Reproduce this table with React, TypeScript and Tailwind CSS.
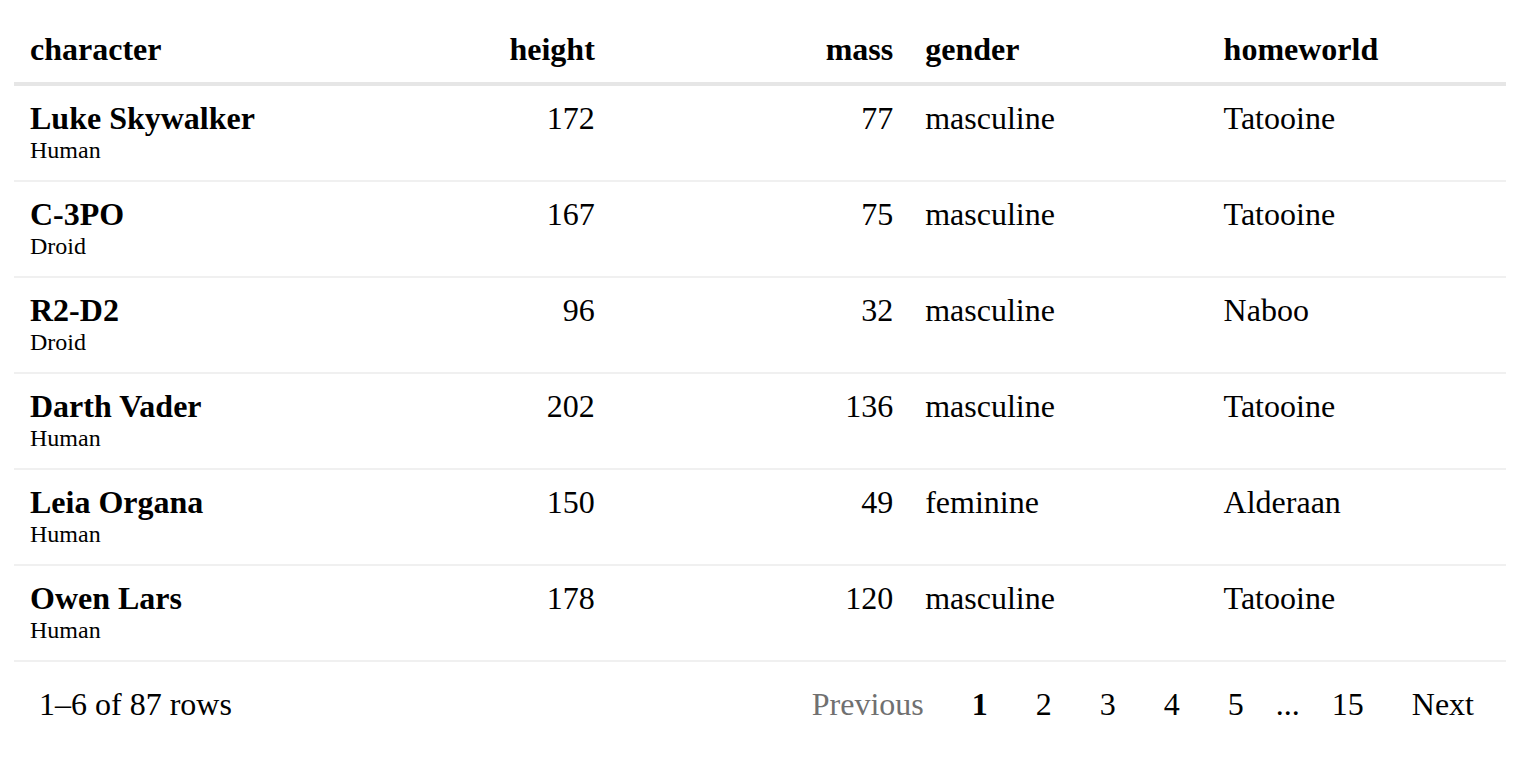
import React from 'react';

type Row = {
  name: string;
  species: string;
  height: number;
  mass: number;
  gender: string;
  homeworld: string;
};

const rows: Row[] = [
  { name: 'Luke Skywalker', species: 'Human', height: 172, mass: 77, gender: 'masculine', homeworld: 'Tatooine' },
  { name: 'C-3PO', species: 'Droid', height: 167, mass: 75, gender: 'masculine', homeworld: 'Tatooine' },
  { name: 'R2-D2', species: 'Droid', height: 96, mass: 32, gender: 'masculine', homeworld: 'Naboo' },
  { name: 'Darth Vader', species: 'Human', height: 202, mass: 136, gender: 'masculine', homeworld: 'Tatooine' },
  { name: 'Leia Organa', species: 'Human', height: 150, mass: 49, gender: 'feminine', homeworld: 'Alderaan' },
  { name: 'Owen Lars', species: 'Human', height: 178, mass: 120, gender: 'masculine', homeworld: 'Tatooine' },
];

const pages = ['1', '2', '3', '4', '5'];

const App = () => {
  return (
    <div
      className="w-full bg-white pt-[16px] pr-[16px] pl-[14px] text-black"
      style={{ fontFamily: '"Liberation Serif", "Times New Roman", serif' }}
    >
      {/* header */}
      <div className="grid grid-cols-5 border-b-4 border-[#e6e6e6] text-[32px] font-bold leading-[35px]">
        <div className="px-4 pt-4 pb-[15px]">character</div>
        <div className="px-4 pt-4 pb-[15px] text-right">height</div>
        <div className="px-4 pt-4 pb-[15px] text-right">mass</div>
        <div className="px-4 pt-4 pb-[15px]">gender</div>
        <div className="px-4 pt-4 pb-[15px]">homeworld</div>
      </div>

      {rows.map((r) => (
        <div
          key={r.name}
          className="grid h-[96px] grid-cols-5 border-b-2 border-[#f0f0f0] text-[32px] leading-[37px]"
        >
          <div className="px-4 pt-[14px]">
            <div className="font-bold">{r.name}</div>
            <div className="text-[24px] leading-[27px]">{r.species}</div>
          </div>
          <div className="px-4 pt-[14px] text-right">{r.height}</div>
          <div className="px-4 pt-[14px] text-right">{r.mass}</div>
          <div className="px-4 pt-[14px]">{r.gender}</div>
          <div className="px-4 pt-[14px]">{r.homeworld}</div>
        </div>
      ))}

      {/* pagination */}
      <div className="flex items-center justify-between pt-[17px] pr-2 pl-[25px] text-[32px] leading-[35px]">
        <div>1–6 of 87 rows</div>
        <div className="flex items-center">
          <button className="px-6 py-2 text-[#707070]" disabled>
            Previous
          </button>
          {pages.map((p) => (
            <button key={p} className={p === '1' ? 'px-6 py-2 font-bold' : 'px-6 py-2'}>
              {p}
            </button>
          ))}
          <span className="mx-2 px-0 py-2">...</span>
          <button className="px-6 py-2">15</button>
          <button className="px-6 py-2">Next</button>
        </div>
      </div>
    </div>
  );
};

export default App;
